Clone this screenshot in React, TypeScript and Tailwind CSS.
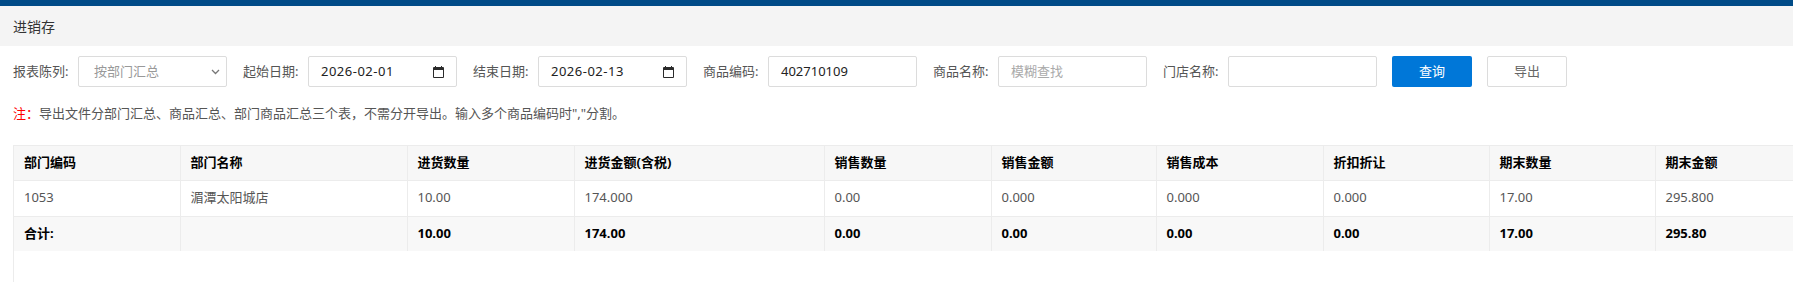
import React from 'react'

const font = { fontFamily: '"Noto Sans", "Noto Sans CJK SC", sans-serif' }

const columns = [
  { title: '部门编码', w: 'w-[166px]' },
  { title: '部门名称', w: 'w-[227px]' },
  { title: '进货数量', w: 'w-[167px]' },
  { title: '进货金额(含税)', w: 'w-[250px]' },
  { title: '销售数量', w: 'w-[167px]' },
  { title: '销售金额', w: 'w-[165px]' },
  { title: '销售成本', w: 'w-[167px]' },
  { title: '折扣折让', w: 'w-[166px]' },
  { title: '期末数量', w: 'w-[166px]' },
  { title: '期末金额', w: 'w-[220px]' },
]

const row = ['1053', '湄潭太阳城店', '10.00', '174.000', '0.00', '0.000', '0.000', '0.000', '17.00', '295.800']
const total = ['合计:', '', '10.00', '174.00', '0.00', '0.00', '0.00', '0.00', '17.00', '295.80']

const CalendarIcon = () => (
  <svg width="11" height="12" viewBox="0 0 11 12">
    <path d="M2 0h1v1h5V0h1v1h1a1 1 0 0 1 1 1v9a1 1 0 0 1-1 1H1a1 1 0 0 1-1-1V2a1 1 0 0 1 1-1h1zM1 4v7h9V4z" fill="#2b2b2b" />
  </svg>
)

const Label = ({ text }: { text: string }) => (
  <span className="w-[65px] shrink-0 text-[13px] text-[#555]">{text}</span>
)

const Box = ({ children }: { children?: React.ReactNode }) => (
  <div className="flex h-[31px] w-[149px] shrink-0 items-center rounded-[2px] border border-[#dcdcdc] bg-white px-3 text-[13px]">
    {children}
  </div>
)

const DateBox = ({ value }: { value: string }) => (
  <Box>
    <span className="flex-1 tracking-[0.5px] text-[#222]">{value}</span>
    <CalendarIcon />
  </Box>
)

export default function App() {
  return (
    <div className="h-[282px] w-full overflow-hidden bg-white" style={font}>
      <div className="h-[6px] bg-[#004b87]" />
      <div className="flex h-[40px] items-center bg-[#f4f4f4] px-[13px] text-[14px] text-[#333]">进销存</div>

      <div className="mt-[10px] flex items-center px-[13px]">
        <Label text="报表陈列:" />
        <Box>
          <span className="flex-1 pl-[3px] text-[#999]">按部门汇总</span>
          <svg width="9" height="6" viewBox="0 0 9 6" className="-mr-[6px]">
            <path d="M1 1l3.5 3.5L8 1" stroke="#777" strokeWidth="1.3" fill="none" />
          </svg>
        </Box>
        <div className="w-[16px] shrink-0" />
        <Label text="起始日期:" />
        <DateBox value="2026-02-01" />
        <div className="w-[16px] shrink-0" />
        <Label text="结束日期:" />
        <DateBox value="2026-02-13" />
        <div className="w-[16px] shrink-0" />
        <Label text="商品编码:" />
        <Box>
          <span className="text-[#222]">402710109</span>
        </Box>
        <div className="w-[16px] shrink-0" />
        <Label text="商品名称:" />
        <Box>
          <span className="text-[#aaa]">模糊查找</span>
        </Box>
        <div className="w-[16px] shrink-0" />
        <Label text="门店名称:" />
        <Box />
        <button className="ml-[15px] h-[31px] w-[80px] rounded-[2px] bg-[#0077d8] text-[13px] text-white">查询</button>
        <button className="ml-[15px] h-[31px] w-[80px] rounded-[2px] border border-[#dcdcdc] bg-white text-[13px] text-[#666]">导出</button>
      </div>

      <p className="mt-[16px] px-[13px] text-[13px] leading-[20px] text-[#555]">
        <span className="text-[#ff0000]">注：</span>
        导出文件分部门汇总、商品汇总、部门商品汇总三个表，不需分开导出。输入多个商品编码时","分割。
      </p>

      <div className="mt-[22px] ml-[13px] h-[200px] w-[1841px] border-l border-t border-[#ececec]">
        <table className="w-[1841px] table-fixed border-collapse text-[13px]">
          <thead>
            <tr className="h-[34px] bg-[#f7f7f7]">
              {columns.map((c) => (
                <th key={c.title} className={`${c.w} border-r border-b border-[#ececec] px-[10px] text-left font-bold text-black`}>
                  {c.title}
                </th>
              ))}
            </tr>
          </thead>
          <tbody>
            <tr className="h-[36px] bg-white">
              {row.map((v, i) => (
                <td key={i} className="border-r border-b border-[#ececec] px-[10px] text-[#555]">{v}</td>
              ))}
            </tr>
            <tr className="h-[35px] bg-[#f8f8f8]">
              {total.map((v, i) => (
                <td key={i} className="border-r border-[#ececec] px-[10px] font-bold text-black">{v}</td>
              ))}
            </tr>
          </tbody>
        </table>
      </div>
    </div>
  )
}
